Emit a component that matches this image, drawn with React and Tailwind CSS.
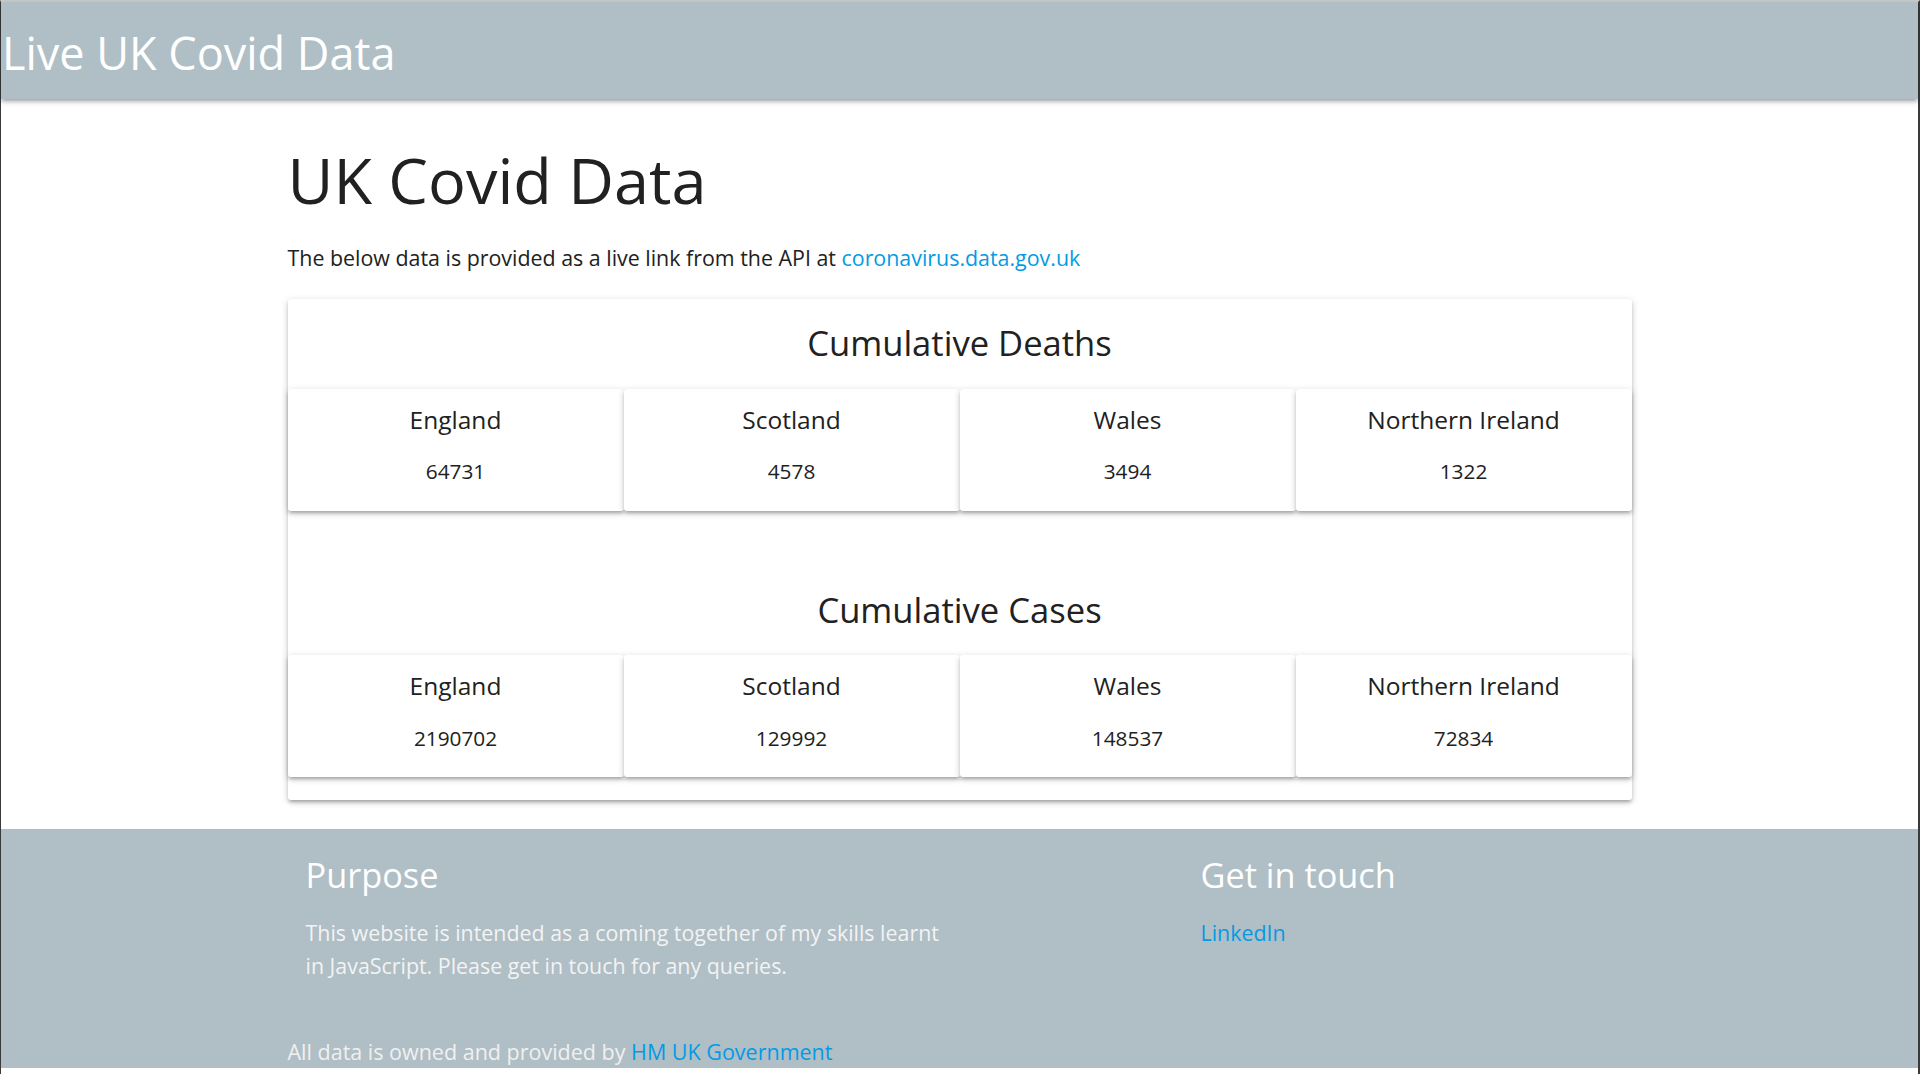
import React from "react";

const deaths = [
  ["England", "64731"],
  ["Scotland", "4578"],
  ["Wales", "3494"],
  ["Northern Ireland", "1322"],
];
const cases = [
  ["England", "2190702"],
  ["Scotland", "129992"],
  ["Wales", "148537"],
  ["Northern Ireland", "72834"],
];

const shadow =
  "shadow-[0_3px_3px_0_rgba(0,0,0,0.14),0_4px_2px_-3px_rgba(0,0,0,0.12),0_2px_7px_0_rgba(0,0,0,0.2)]";

function Row({ items }) {
  return (
    <div className="grid grid-cols-4">
      {items.map(([name, value]) => (
        <div
          key={name}
          className={`h-[122px] bg-white rounded-[3px] text-center ${shadow} pt-[17px]`}
        >
          <div className="text-[24.5px] leading-[28.6px] text-[#212121]">{name}</div>
          <div className="mt-[21px] text-[20.8px] leading-[33.75px] text-[#212121]">{value}</div>
        </div>
      ))}
    </div>
  );
}

export default function App() {
  return (
    <div
      className="min-h-[1074px] bg-white border-t-2 border-t-[#cdcdcd] border-l border-l-[#3a3a3a] border-r-2 border-r-[#3a3a3a] flex flex-col"
      style={{ fontFamily: '"Open Sans", "Noto Sans", sans-serif' }}
    >
      <header className={`h-[97px] bg-[#b0bec5] flex items-center ${shadow} relative z-10`}>
        <span className="pl-[1px] pt-[3px] text-[45px] leading-none text-white">Live UK Covid Data</span>
      </header>

      <main className="w-[1344px] mx-auto">
        <h1 className="mt-[45px] text-[63px] leading-[72.6px] text-[#212121]">UK Covid Data</h1>
        <p className="mt-[24px] text-[21.4px] leading-[33.75px] text-[#212121]">
          The below data is provided as a live link from the API at{" "}
          <a className="text-[#039be5]">coronavirus.data.gov.uk</a>
        </p>
        <section className={`mt-[24.5px] bg-white rounded-[3px] ${shadow} pt-[24px] pb-[23px]`}>
          <h2 className="text-center text-[34.6px] leading-[40.7px] text-[#212121]">Cumulative Deaths</h2>
          <div className="mt-[25px]">
            <Row items={deaths} />
          </div>
          <h2 className="mt-[79px] text-center text-[34.6px] leading-[40.7px] text-[#212121]">Cumulative Cases</h2>
          <div className="mt-[25px]">
            <Row items={cases} />
          </div>
        </section>
      </main>

      <footer className="mt-[29px] bg-[#b0bec5] h-[239px]">
        <div className="w-[1344px] mx-auto pt-[26px]">
          <div className="flex">
            <div className="ml-[18px] w-[645px]">
              <h3 className="text-[34.3px] leading-[39.6px] text-white">Purpose</h3>
              <p className="mt-[21px] text-[21.4px] leading-[33px] text-[#f3f3f3]">
                This website is intended as a coming together of my skills learnt in JavaScript. Please get in touch for any queries.
              </p>
            </div>
            <div className="ml-[250px]">
              <h3 className="text-[34.3px] leading-[39.6px] text-white">Get in touch</h3>
              <p className="mt-[21px] text-[21.4px] leading-[33px]">
                <a className="text-[#039be5]">LinkedIn</a>
              </p>
            </div>
          </div>
          <div className="mt-[53px] text-[21.5px] leading-[33px] text-[#f0f0f0]">
            All data is owned and provided by <a className="text-[#039be5]">HM UK Government</a>
          </div>
        </div>
      </footer>
    </div>
  );
}
